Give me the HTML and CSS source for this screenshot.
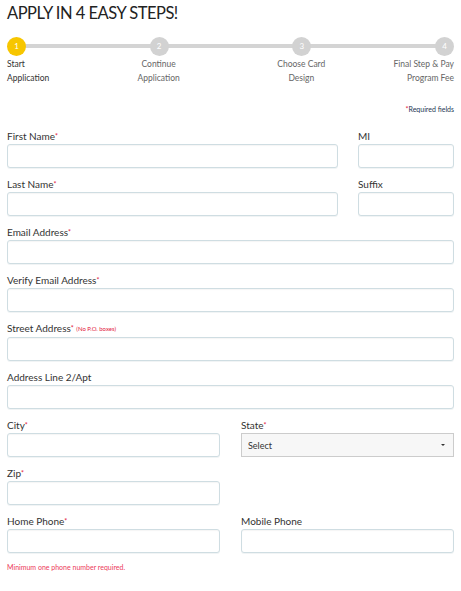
FILE: index.html
```html
<!DOCTYPE html>
<html lang="en">
<head>
<meta charset="utf-8">
<title>Apply in 4 easy steps</title>
<link rel="stylesheet" href="styles.css">
</head>
<body>
<div class="page">
  <h1 class="title">APPLY IN 4 EASY STEPS!</h1>

  <div class="steps">
    <div class="step step-first is-active">
      <span class="dot">1</span>
      <span class="step-label">Start<br>Application</span>
    </div>
    <div class="step step-mid">
      <span class="dot">2</span>
      <span class="step-label">Continue<br>Application</span>
    </div>
    <div class="step step-mid">
      <span class="dot">3</span>
      <span class="step-label">Choose Card<br>Design</span>
    </div>
    <div class="step step-last">
      <span class="dot">4</span>
      <span class="step-label">Final Step &amp; Pay<br>Program Fee</span>
    </div>
  </div>

  <p class="required-note"><span class="req">*</span>Required fields</p>

  <form class="form">
    <div class="row row-wide">
      <div class="field">
        <label class="label">First Name<span class="req">*</span></label>
        <input class="input" type="text">
      </div>
      <div class="field">
        <label class="label">MI</label>
        <input class="input" type="text">
      </div>
    </div>

    <div class="row row-wide">
      <div class="field">
        <label class="label">Last Name<span class="req">*</span></label>
        <input class="input" type="text">
      </div>
      <div class="field">
        <label class="label">Suffix</label>
        <input class="input" type="text">
      </div>
    </div>

    <div class="field">
      <label class="label">Email Address<span class="req">*</span></label>
      <input class="input" type="text">
    </div>

    <div class="field">
      <label class="label">Verify Email Address<span class="req">*</span></label>
      <input class="input" type="text">
    </div>

    <div class="field">
      <label class="label">Street Address<span class="req">*</span> <span class="hint">(No P.O. boxes)</span></label>
      <input class="input" type="text">
    </div>

    <div class="field">
      <label class="label">Address Line 2/Apt</label>
      <input class="input" type="text">
    </div>

    <div class="row row-half">
      <div class="field">
        <label class="label">City<span class="req">*</span></label>
        <input class="input" type="text">
      </div>
      <div class="field">
        <label class="label">State<span class="req">*</span></label>
        <div class="select-wrap">
          <select class="select"><option>Select</option></select>
          <span class="caret"></span>
        </div>
      </div>
    </div>

    <div class="row row-half">
      <div class="field">
        <label class="label">Zip<span class="req">*</span></label>
        <input class="input" type="text">
      </div>
      <div></div>
    </div>

    <div class="row row-half row-last">
      <div class="field">
        <label class="label">Home Phone<span class="req">*</span></label>
        <input class="input" type="text">
      </div>
      <div class="field">
        <label class="label">Mobile Phone</label>
        <input class="input" type="text">
      </div>
    </div>

    <p class="error">Minimum one phone number required.</p>
    <p class="next-text">Please tell us a little about your household.</p>
  </form>
</div>
</body>
</html>
```

FILE: styles.css
```css
* { box-sizing: border-box; }

html, body {
  margin: 0;
  padding: 0;
  background: #ffffff;
}

body {
  font-family: Lato, "Open Sans", "Liberation Sans", sans-serif;
  color: #333333;
  overflow: hidden;
}

.page {
  padding: 2px 7px 0 7px;
}

.title {
  margin: 0;
  font-size: 16.5px;
  line-height: 22px;
  font-weight: 400;
  color: #222222;
  letter-spacing: -0.5px;
}

/* Steps */
.steps {
  position: relative;
  display: flex;
  justify-content: space-between;
  margin-top: 13px;
}

.steps::before {
  content: "";
  position: absolute;
  left: 9px;
  right: 9px;
  top: 7px;
  height: 4px;
  background: #d4d4d4;
}

.step {
  position: relative;
  width: 19px;
  display: flex;
  flex-direction: column;
}

.dot {
  width: 19px;
  height: 19px;
  border-radius: 50%;
  background: #d2d2d2;
  color: #ffffff;
  font-size: 8px;
  line-height: 19px;
  text-align: center;
}

.is-active .dot {
  background: #f7c600;
}

.step-label {
  display: block;
  margin-top: 1px;
  width: 110px;
  font-size: 8.5px;
  line-height: 14px;
  color: #666666;
  white-space: nowrap;
}

.step-first .step-label {
  text-align: left;
  color: #333333;
}

.step-mid .step-label {
  margin-left: -46px;
  text-align: center;
}

.step-last .step-label {
  margin-left: -91px;
  text-align: right;
}

/* Required note */
.required-note {
  margin: 19px 0 0 0;
  text-align: right;
  font-size: 7px;
  line-height: 10px;
  color: #263552;
}

.req {
  color: #e3173e;
  font-size: 7px;
  vertical-align: top;
}

.required-note .req {
  vertical-align: baseline;
}

/* Form */
.form {
  margin-top: 15px;
}

.row {
  display: grid;
}

.row-wide {
  grid-template-columns: 1fr 96px;
  column-gap: 20px;
}

.row-half {
  grid-template-columns: 1fr 1fr;
  column-gap: 21px;
}

.field {
  margin-bottom: 9px;
  min-width: 0;
}

.label {
  display: block;
  font-size: 10px;
  line-height: 14px;
  color: #333333;
  margin-bottom: 1px;
}

.hint {
  font-size: 6px;
  color: #e3173e;
  vertical-align: 1px;
}

.input {
  display: block;
  width: 100%;
  height: 24px;
  margin: 0;
  border: 1px solid #cfdde2;
  border-radius: 3px;
  background: #ffffff;
  box-shadow: inset 0 1px 1px rgba(0, 0, 0, 0.04), 0 1px 0 rgba(160, 180, 190, 0.15);
  font: inherit;
}

.select-wrap {
  position: relative;
}

.select {
  display: block;
  width: 100%;
  height: 24px;
  margin: 0;
  padding: 0 0 0 6px;
  border: 1px solid #cccccc;
  border-radius: 0;
  background: #f7f7f7;
  color: #333333;
  font-family: inherit;
  font-size: 9px;
  -webkit-appearance: none;
  appearance: none;
}

.caret {
  position: absolute;
  right: 9px;
  top: 11px;
  width: 0;
  height: 0;
  border-left: 2px solid transparent;
  border-right: 2px solid transparent;
  border-top: 2.5px solid #333333;
}

.row-last .field {
  margin-bottom: 0;
}

.error {
  margin: 9px 0 0 0;
  font-size: 7px;
  line-height: 10px;
  color: #ec3a5a;
}

.next-text {
  margin: 15px 0 0 0;
  font-size: 10px;
  line-height: 14px;
  color: #bbbbbb;
}
```
